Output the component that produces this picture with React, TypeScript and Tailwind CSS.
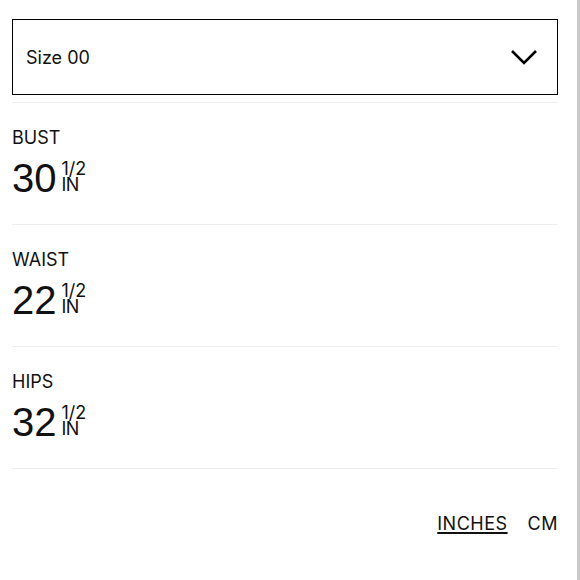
const rows = [
  { label: 'BUST', value: '30' },
  { label: 'WAIST', value: '22' },
  { label: 'HIPS', value: '32' },
];

function Measure({ label, value }: { label: string; value: string }) {
  return (
    <div className="h-[122px] border-b border-[#eeeeee] pt-[23px]">
      <div className="text-[18px] leading-6 text-[#111]">{label}</div>
      <div className="mt-[8px] flex items-start">
        <span className="font-['Liberation_Sans',sans-serif] text-[40px] leading-[40px] text-[#111]">{value}</span>
        <span className="ml-[5px] mt-[3px] flex flex-col text-[18px] leading-[16px] text-[#111]">
          <span>1/2</span>
          <span className="tracking-[-0.5px]">IN</span>
        </span>
      </div>
    </div>
  );
}

export default function App() {
  return (
    <div className="flex h-[580px] w-[580px] bg-white font-['Inter',sans-serif]">
      <div className="flex-1 pl-3 pr-[19px] pt-[19px]">
        {/* Size picker */}
        <div className="flex h-[76px] items-center justify-between border-[1.5px] border-black pl-[13px] pr-[19px]">
          <span className="text-[18px] text-[#111]">Size 00</span>
          <svg width="28" height="18" viewBox="0 0 28 18" fill="none" stroke="black" strokeWidth={2.6}>
            <polyline points="2,3 14,15 26,3" />
          </svg>
        </div>
        <div className="border-b border-[#eeeeee] pt-[7px]" />

        {rows.map((r) => (
          <Measure key={r.label} {...r} />
        ))}

        <div className="mt-[41px] flex justify-end gap-5 text-[18px] text-[#111]">
          <span className="tracking-[0.5px] underline decoration-2 underline-offset-2">INCHES</span>
          <span className="tracking-[0.5px]">CM</span>
        </div>
      </div>
      <div className="w-[3px] bg-[#c9c9c9]" />
    </div>
  );
}
